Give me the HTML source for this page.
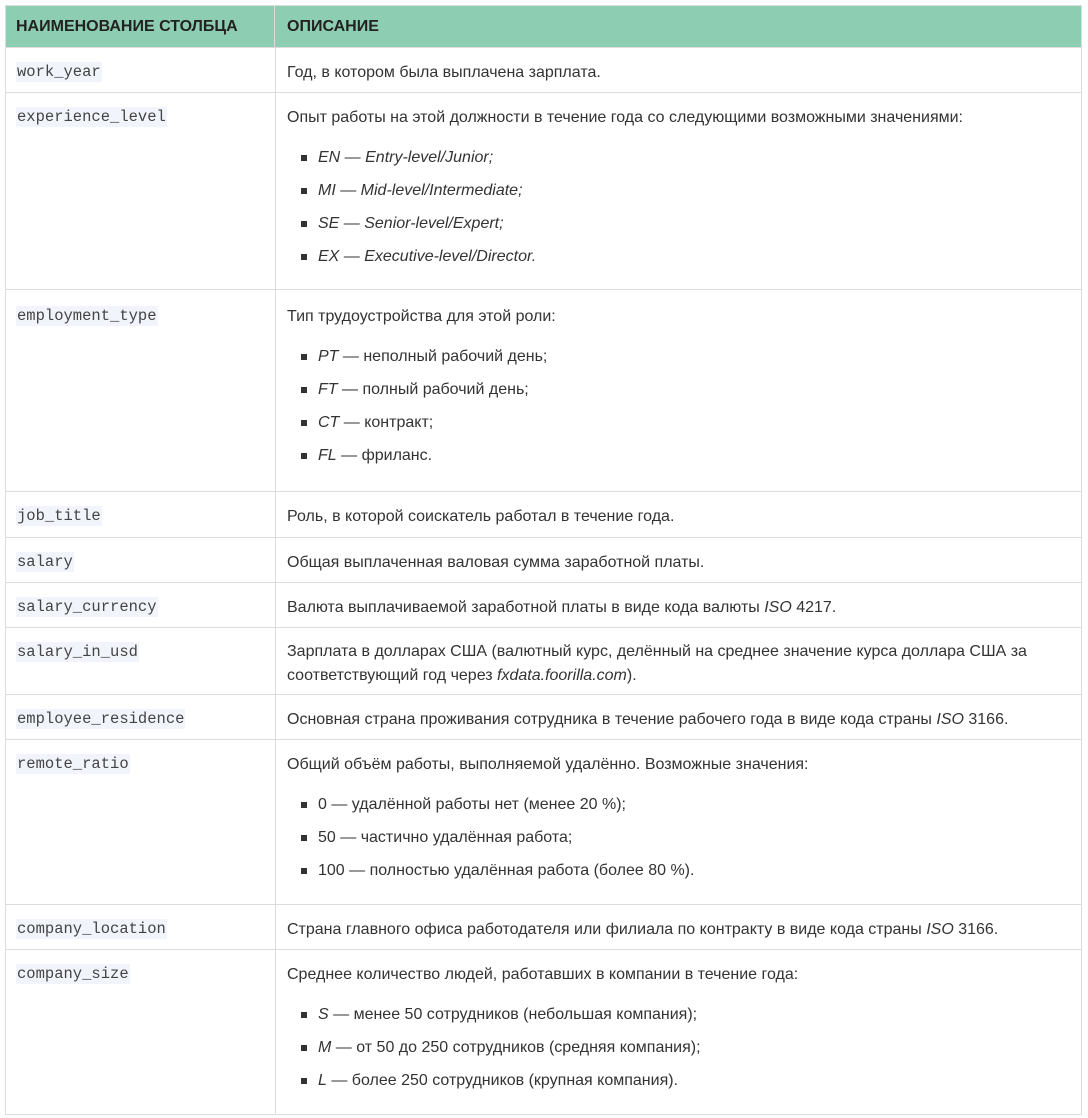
<!DOCTYPE html>
<html><head><meta charset="utf-8"><style>
body{margin:0;background:#fff;width:1088px;height:1118px;position:relative;font-family:"Liberation Sans",sans-serif;font-size:16px;color:#333;}
.r{position:absolute;left:5px;width:1077px;border:1px solid #dcdcdc;border-top:none;box-sizing:border-box;}
.l{position:absolute;left:0;top:0;bottom:0;width:269px;border-right:1px solid #dcdcdc;}
.c{position:absolute;left:10px;top:14px;font-family:"Liberation Mono",monospace;font-size:15.5px;line-height:20px;background:#f1f5fb;color:#444;padding:0 1px;}
.d{position:absolute;left:281px;top:15px;right:10px;line-height:20px;}
ul{list-style:none;margin:20px 0 0 0;padding:0 0 0 14px;}
li{position:relative;padding-left:17px;margin-bottom:13px;}
li:before{content:"";position:absolute;left:0;top:7px;width:6px;height:6px;background:#333;}
i{font-style:italic;}
.h{position:absolute;left:5px;top:5px;width:1077px;height:43px;background:#8dcdb1;border:1px solid #dcdcdc;box-sizing:border-box;font-weight:bold;color:#222;font-size:16px;}
.h span{position:absolute;top:12px;}
</style></head><body>
<div class="h"><span style="left:10px">НАИМЕНОВАНИЕ СТОЛБЦА</span><div style="position:absolute;left:268px;top:0;bottom:0;border-left:1px solid #dcdcdc"></div><span style="left:281px">ОПИСАНИЕ</span></div>

<div class="r" style="top:48px;height:45px"><div class="l"></div><span class="c">work_year</span><div class="d">Год, в котором была выплачена зарплата.</div></div>

<div class="r" style="top:93px;height:197px"><div class="l"></div><span class="c">experience_level</span><div class="d">Опыт работы на этой должности в течение года со следующими возможными значениями:
<ul><li><i>EN — Entry-level/Junior;</i></li><li><i>MI — Mid-level/Intermediate;</i></li><li><i>SE — Senior-level/Expert;</i></li><li><i>EX — Executive-level/Director.</i></li></ul></div></div>

<div class="r" style="top:290px;height:202px"><div class="l"></div><span class="c" style="top:16px">employment_type</span><div class="d" style="top:17px">Тип трудоустройства для этой роли:
<ul><li><i>PT</i> — неполный рабочий день;</li><li><i>FT</i> — полный рабочий день;</li><li><i>CT</i> — контракт;</li><li><i>FL</i> — фриланс.</li></ul></div></div>

<div class="r" style="top:492px;height:46px"><div class="l"></div><span class="c">job_title</span><div class="d">Роль, в которой соискатель работал в течение года.</div></div>

<div class="r" style="top:538px;height:45px"><div class="l"></div><span class="c">salary</span><div class="d">Общая выплаченная валовая сумма заработной платы.</div></div>

<div class="r" style="top:583px;height:45px"><div class="l"></div><span class="c">salary_currency</span><div class="d">Валюта выплачиваемой заработной платы в виде кода валюты <i>ISO</i> 4217.</div></div>

<div class="r" style="top:628px;height:67px"><div class="l"></div><span class="c">salary_in_usd</span><div class="d" style="top:12px;line-height:24px">Зарплата в долларах США (валютный курс, делённый на среднее значение курса доллара США за<br>соответствующий год через <i>fxdata.foorilla.com</i>).</div></div>

<div class="r" style="top:695px;height:45px"><div class="l"></div><span class="c">employee_residence</span><div class="d">Основная страна проживания сотрудника в течение рабочего года в виде кода страны <i>ISO</i> 3166.</div></div>

<div class="r" style="top:740px;height:165px"><div class="l"></div><span class="c">remote_ratio</span><div class="d">Общий объём работы, выполняемой удалённо. Возможные значения:
<ul><li>0 — удалённой работы нет (менее 20 %);</li><li>50 — частично удалённая работа;</li><li>100 — полностью удалённая работа (более 80 %).</li></ul></div></div>

<div class="r" style="top:905px;height:45px"><div class="l"></div><span class="c">company_location</span><div class="d">Страна главного офиса работодателя или филиала по контракту в виде кода страны <i>ISO</i> 3166.</div></div>

<div class="r" style="top:950px;height:165px"><div class="l"></div><span class="c">company_size</span><div class="d">Среднее количество людей, работавших в компании в течение года:
<ul><li><i>S</i> — менее 50 сотрудников (небольшая компания);</li><li><i>M</i> — от 50 до 250 сотрудников (средняя компания);</li><li><i>L</i> — более 250 сотрудников (крупная компания).</li></ul></div></div>
</body></html>
